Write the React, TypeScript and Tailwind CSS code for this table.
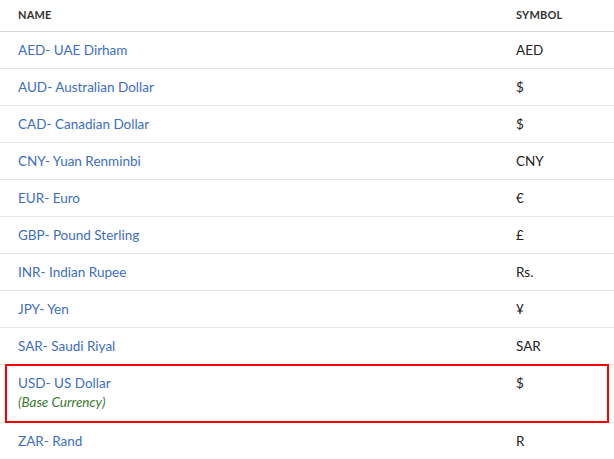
import React from 'react';

interface Currency {
  code: string;
  name: string;
  symbol: string;
  base?: boolean;
}

const currencies: Currency[] = [
  { code: 'AED', name: 'UAE Dirham', symbol: 'AED' },
  { code: 'AUD', name: 'Australian Dollar', symbol: '$' },
  { code: 'CAD', name: 'Canadian Dollar', symbol: '$' },
  { code: 'CNY', name: 'Yuan Renminbi', symbol: 'CNY' },
  { code: 'EUR', name: 'Euro', symbol: '€' },
  { code: 'GBP', name: 'Pound Sterling', symbol: '£' },
  { code: 'INR', name: 'Indian Rupee', symbol: 'Rs.' },
  { code: 'JPY', name: 'Yen', symbol: '¥' },
  { code: 'SAR', name: 'Saudi Riyal', symbol: 'SAR' },
  { code: 'USD', name: 'US Dollar', symbol: '$', base: true },
  { code: 'ZAR', name: 'Rand', symbol: 'R' }
];

const App: React.FC = () => {
  return (
    <div className="w-[614px] bg-white font-['Lato','Liberation_Sans',sans-serif] text-[13.5px]">
      <div className="grid grid-cols-[498px_1fr] border-b border-[#d9d9d9] h-[32px] items-center text-[11px] font-bold text-[#333] tracking-[0.2px]">
        <div className="px-[18px]">NAME</div>
        <div className="px-[18px]">SYMBOL</div>
      </div>

      {currencies.map((c) => (
        <div
          key={c.code}
          className="relative grid grid-cols-[498px_1fr] border-b border-[#e6e6e6] py-[9px] leading-[18px]"
        >
          <div className="px-[18px]">
            <a href="#" className="text-[#3d6ebf]">
              {c.code}- {c.name}
            </a>
            {c.base && (
              <div className="italic text-[#3a7a2c] leading-[20px] pb-[1px]">(Base Currency)</div>
            )}
          </div>
          <div className="px-[18px] text-[#222]">{c.symbol}</div>
          {c.base && (
            <div className="absolute top-[-1px] bottom-[-1px] left-[5px] right-[5px] border-2 border-[#f00] pointer-events-none" />
          )}
        </div>
      ))}
    </div>
  );
};

export default App;
